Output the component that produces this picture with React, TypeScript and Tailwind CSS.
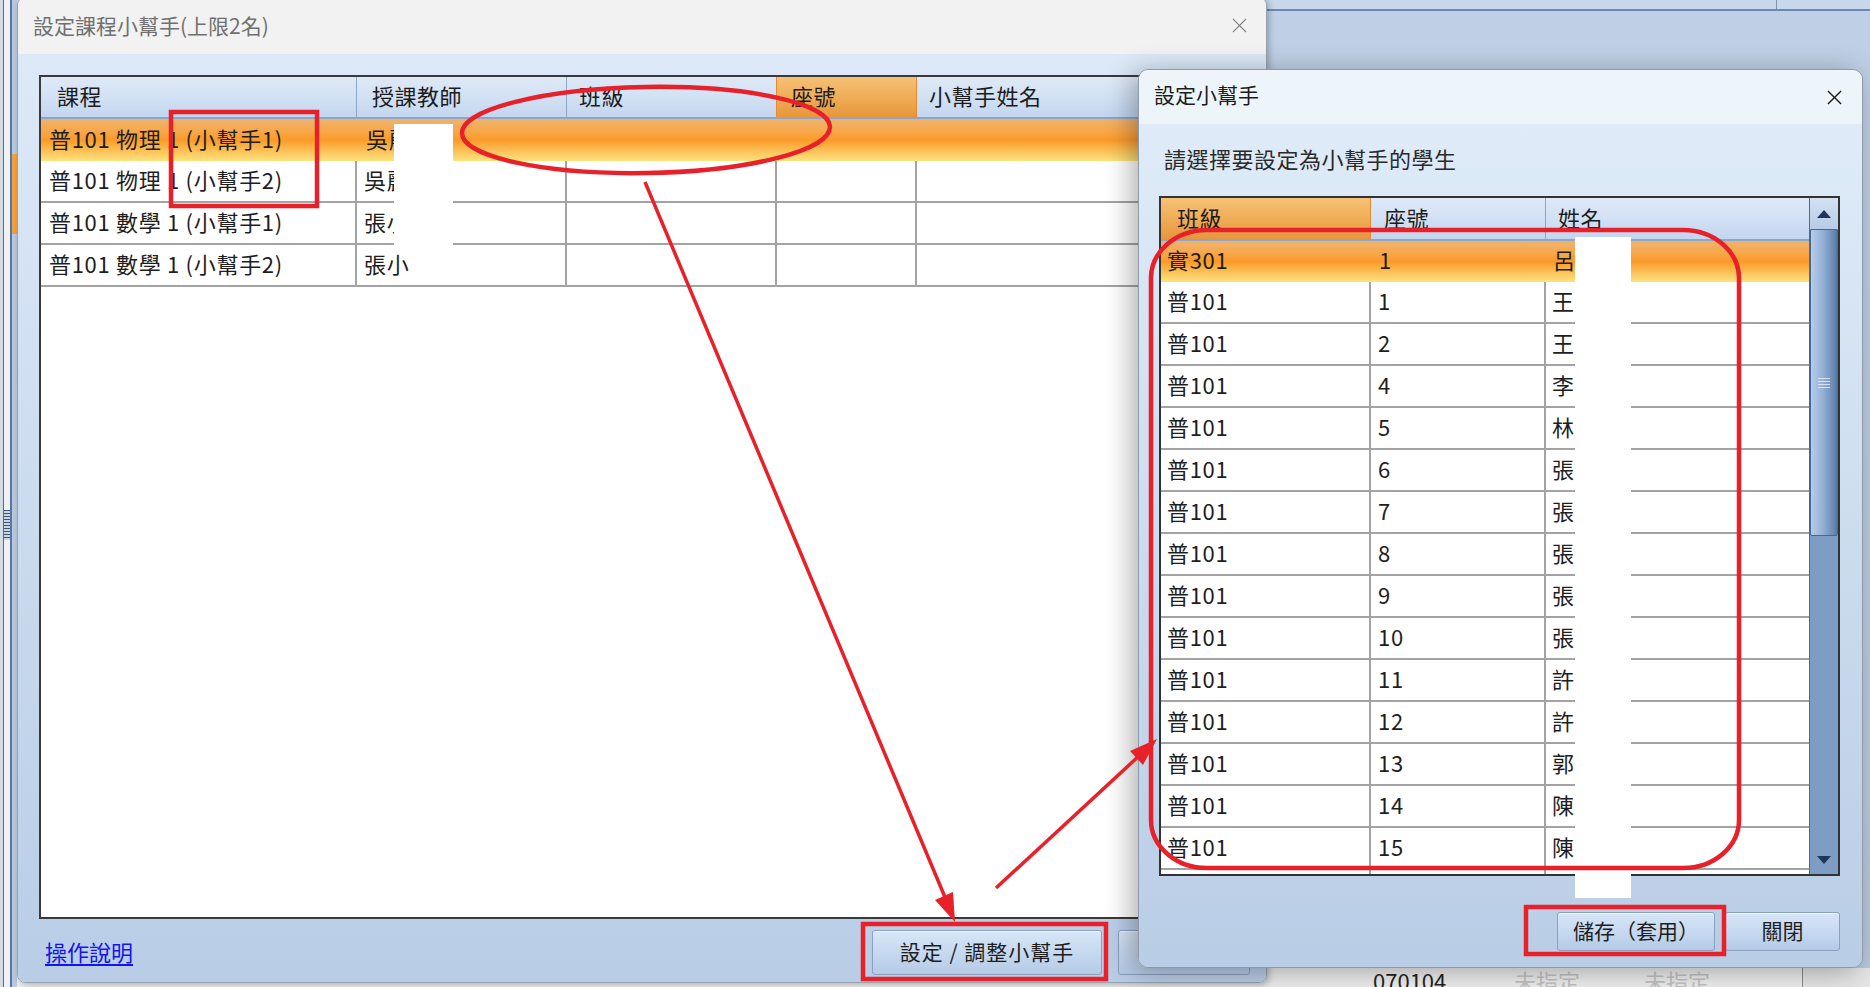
import React from "react";

const FONT = "font-['Noto_Sans_CJK_TC','Noto_Sans',sans-serif]";

const blueHead =
  "bg-[linear-gradient(to_bottom,#dfe9f7_0%,#d2e1f4_50%,#c3d6ef_100%)]";
const orangeHead =
  "bg-[linear-gradient(to_bottom,#f6c176_0%,#f0ad57_50%,#e7963b_100%)]";
const orangeRow =
  "bg-[linear-gradient(to_bottom,#efb26f_0%,#f7a84c_28%,#fb9a29_50%,#fcc158_76%,#fde37d_100%)]";

const courses = [
  { course: "普101 物理 1 (小幫手1)", teacher: "吳麗" },
  { course: "普101 物理 1 (小幫手2)", teacher: "吳麗" },
  { course: "普101 數學 1 (小幫手1)", teacher: "張小" },
  { course: "普101 數學 1 (小幫手2)", teacher: "張小" },
];

const students = [
  { cls: "實301", no: "1", name: "呂" },
  { cls: "普101", no: "1", name: "王" },
  { cls: "普101", no: "2", name: "王" },
  { cls: "普101", no: "4", name: "李" },
  { cls: "普101", no: "5", name: "林" },
  { cls: "普101", no: "6", name: "張" },
  { cls: "普101", no: "7", name: "張" },
  { cls: "普101", no: "8", name: "張" },
  { cls: "普101", no: "9", name: "張" },
  { cls: "普101", no: "10", name: "張" },
  { cls: "普101", no: "11", name: "許" },
  { cls: "普101", no: "12", name: "許" },
  { cls: "普101", no: "13", name: "郭" },
  { cls: "普101", no: "14", name: "陳" },
  { cls: "普101", no: "15", name: "陳" },
  { cls: "普101", no: "16", name: "陳" },
];

function CloseIcon({ color, size, stroke }: { color: string; size: number; stroke: number }) {
  return (
    <svg width={size} height={size} viewBox="0 0 16 16">
      <path d="M1 1 L15 15 M15 1 L1 15" stroke={color} strokeWidth={stroke} fill="none" />
    </svg>
  );
}

function OfficeButton({ label, className }: { label: string; className: string }) {
  return (
    <div
      className={`flex items-center justify-center pb-[2px] rounded-[3px] border border-[#8aa0bf] bg-[linear-gradient(to_bottom,#d8e6f7_0%,#c6d9f0_50%,#b5cae6_100%)] shadow-[inset_0_1px_0_rgba(255,255,255,0.7)] text-[21px] leading-none text-[#1e1e1e] ${className}`}
    >
      {label}
    </div>
  );
}

function BackgroundApp() {
  return (
    <div className="absolute inset-0 flex">
      {/* window chrome on the far left */}
      <div className="w-[17px] h-full flex">
        <div className="w-[3px] bg-[#d6dce4]" />
        <div className="w-[1px] bg-[#4f6c93]" />
        <div className="w-[6px] flex flex-col bg-[#eef2f7]">
          <div className="h-[510px]" />
          <div className="h-[30px] bg-[repeating-linear-gradient(to_bottom,#3d5677_0px,#3d5677_1px,#c9d6e6_1px,#c9d6e6_3px)]" />
        </div>
        <div className="w-[2px] bg-[#5876a0]" />
        <div className="w-[5px] flex flex-col bg-[#b9cae0]">
          <div className="h-[154px]" />
          <div className="h-[80px] bg-[#f2a341]" />
        </div>
      </div>
      <div className="flex-1 flex flex-col">
        <div className="h-[9px] bg-[#c8d8ec] flex">
          <div className="w-[1759px]" />
          <div className="w-[1px] bg-[#7f93ad]" />
        </div>
        <div className="h-[2px] bg-[#6d88ad]" />
        <div className="flex-1 bg-linear-to-b from-[#bfd0e6] to-[#b8c9de]" />
        <div className="h-[19px] bg-[#efefef] flex text-[22px] leading-none">
          <div className="w-[1356px]" />
          <div className="w-[141px] pt-[1px] text-[#222]">070104</div>
          <div className="w-[130px] pt-[1px] text-[#c4c4c4]">未指定</div>
          <div className="w-[158px] pt-[1px] text-[#c4c4c4]">未指定</div>
          <div className="w-[1px] bg-[#8a8a8a]" />
          <div className="flex-1 bg-[#e6e6e6]" />
        </div>
      </div>
    </div>
  );
}

const cellText = "text-[22px] leading-none tracking-[0.7px] text-[#1e1e1e]";

function CourseTable() {
  return (
    <div className="h-[844px] border-2 border-[#3a3a3a] bg-white flex flex-col overflow-hidden">
      <div className="h-[42px] shrink-0 flex border-b-2 border-[#8ba6c9] text-[22px] leading-none tracking-[0.5px] text-[#1c1c1c]">
        <div className={`w-[316px] shrink-0 flex items-center pb-[4px] pl-[16px] border-r border-[#8ba6c9] ${blueHead}`}>課程</div>
        <div className={`w-[210px] shrink-0 flex items-center pb-[4px] pl-[15px] border-r border-[#8ba6c9] ${blueHead}`}>授課教師</div>
        <div className={`w-[210px] shrink-0 flex items-center pb-[4px] pl-[12px] border-r border-[#e58a33] ${blueHead}`}>班級</div>
        <div className={`w-[140px] shrink-0 flex items-center pb-[4px] pl-[14px] border-r border-[#e58a33] ${orangeHead}`}>座號</div>
        <div className={`flex-1 flex items-center pb-[4px] pl-[12px] ${blueHead}`}>小幫手姓名</div>
      </div>
      {courses.map((r, i) =>
        i === 0 ? (
          <div key={i} className={`h-[42px] shrink-0 flex ${cellText} ${orangeRow}`}>
            <div className="w-[318px] shrink-0 flex items-center pb-[4px] pl-[8px]">{r.course}</div>
            <div className="w-[210px] shrink-0 flex items-center pb-[4px] pl-[7px]">{r.teacher}</div>
            <div className="flex-1" />
          </div>
        ) : (
          <div key={i} className={`h-[42px] shrink-0 flex border-b-2 border-[#a3a3a3] ${cellText}`}>
            <div className="w-[316px] shrink-0 flex items-center pb-[4px] pl-[8px] border-r-2 border-[#a3a3a3]">{r.course}</div>
            <div className="w-[210px] shrink-0 flex items-center pb-[4px] pl-[7px] border-r-2 border-[#a3a3a3]">{r.teacher}</div>
            <div className="w-[210px] shrink-0 border-r-2 border-[#a3a3a3]" />
            <div className="w-[140px] shrink-0 border-r-2 border-[#a3a3a3]" />
            <div className="flex-1" />
          </div>
        )
      )}
    </div>
  );
}

function ScrollBar() {
  return (
    <div className="w-[29px] shrink-0 flex flex-col border-l border-[#4f6a92] bg-[#7d9dc4]">
      <div className="h-[31px] shrink-0 flex items-center justify-center bg-linear-to-b from-[#d3e1f3] to-[#b7cbe6]">
        <svg width="14" height="8" viewBox="0 0 14 8">
          <path d="M0 8 L7 0 L14 8 Z" fill="#1f3557" />
        </svg>
      </div>
      <div className="h-[307px] shrink-0 rounded-[2px] border border-[#4b6690] bg-[linear-gradient(to_right,#b6cdea_0%,#94b0d5_45%,#6b8bb5_85%,#5a799f_100%)] flex items-center justify-center">
        <div className="flex flex-col gap-[2px]">
          <div className="w-[12px] h-[1px] bg-[#d9e3f0]" />
          <div className="w-[12px] h-[1px] bg-[#d9e3f0]" />
          <div className="w-[12px] h-[1px] bg-[#d9e3f0]" />
          <div className="w-[12px] h-[1px] bg-[#d9e3f0]" />
        </div>
      </div>
      <div className="flex-1" />
      <div className="h-[24px] shrink-0 flex items-start justify-center pt-[6px]">
        <svg width="14" height="8" viewBox="0 0 14 8">
          <path d="M0 0 L14 0 L7 8 Z" fill="#1f3557" />
        </svg>
      </div>
    </div>
  );
}

function StudentTable() {
  return (
    <div className="h-[680px] border-2 border-[#333333] bg-white flex overflow-hidden">
      <div className="flex-1 flex flex-col overflow-hidden">
        <div className="h-[43px] shrink-0 flex border-b-2 border-[#8ba6c9] text-[22px] leading-none tracking-[0.5px] text-[#1c1c1c]">
          <div className={`w-[210px] shrink-0 flex items-center pb-[4px] pl-[16px] border-r border-[#e58a33] ${orangeHead}`}>班級</div>
          <div className={`w-[175px] shrink-0 flex items-center pb-[4px] pl-[13px] border-r border-[#8ba6c9] ${blueHead}`}>座號</div>
          <div className={`flex-1 flex items-center pb-[4px] pl-[12px] ${blueHead}`}>姓名</div>
        </div>
        {students.map((s, i) =>
          i === 0 ? (
            <div key={i} className={`h-[41px] shrink-0 flex ${cellText} ${orangeRow}`}>
              <div className="w-[210px] shrink-0 flex items-center pb-[5px] pl-[6px]">{s.cls}</div>
              <div className="w-[175px] shrink-0 flex items-center pb-[5px] pl-[8px]">{s.no}</div>
              <div className="flex-1 flex items-center pb-[5px] pl-[7px]">{s.name}</div>
            </div>
          ) : (
            <div key={i} className={`h-[42px] shrink-0 flex border-b-2 border-[#a3a3a3] ${cellText}`}>
              <div className="w-[210px] shrink-0 flex items-center pb-[4px] pl-[6px] border-r-2 border-[#a3a3a3]">{s.cls}</div>
              <div className="w-[175px] shrink-0 flex items-center pb-[4px] pl-[7px] border-r-2 border-[#a3a3a3]">{s.no}</div>
              <div className="flex-1 flex items-center pb-[4px] pl-[6px]">{s.name}</div>
            </div>
          )
        )}
      </div>
      <ScrollBar />
    </div>
  );
}

function CourseHelperDialog() {
  return (
    <div className="absolute left-[17px] top-[-3px] w-[1250px] h-[986px] rounded-[8px] border border-[#98a2ae] overflow-hidden flex flex-col shadow-[2px_2px_6px_rgba(0,0,0,0.25)]">
      <div className="h-[56px] shrink-0 bg-[#f2f2f2] flex items-center justify-between pl-[15px] pr-[19px] pb-[1px]">
        <span className="text-[21px] leading-none text-[#707070]">設定課程小幫手(上限2名)</span>
        <CloseIcon color="#7a7a7a" size={15} stroke={1.2} />
      </div>
      <div className="flex-1 flex flex-col px-[21px] pt-[21px] bg-linear-to-b from-[#dde9f8] to-[#b9cde7]">
        <CourseTable />
        <div className="mt-[11px] h-[45px] flex items-center -mr-[5px]">
          <span className="pl-[6px] pb-[3px] text-[22px] leading-none text-[#1414f0] underline underline-offset-[3px]">操作說明</span>
          <div className="ml-auto flex gap-[16px] h-full">
            <OfficeButton label="設定 / 調整小幫手" className="w-[230px] h-full tracking-[1px]" />
            <OfficeButton label="關閉" className="w-[132px] h-full" />
          </div>
        </div>
      </div>
    </div>
  );
}

function PickHelperDialog() {
  return (
    <div className="absolute left-[1138px] top-[69px] w-[725px] h-[899px] rounded-[10px] border border-[#8f9aa7] overflow-hidden flex flex-col shadow-[-6px_4px_28px_rgba(0,0,0,0.32)]">
      <div className="h-[54px] shrink-0 bg-[#edf5fa] flex items-center justify-between pl-[15px] pr-[20px]">
        <span className="pb-[5px] text-[21px] leading-none text-[#1c1c1c]">設定小幫手</span>
        <CloseIcon color="#1a1a1a" size={15} stroke={1.5} />
      </div>
      <div className="flex-1 flex flex-col pl-[20px] pr-[22px] pt-[23px] bg-linear-to-b from-[#dfebf8] to-[#b9cde6]">
        <div className="h-[25px] pl-[5px] text-[22px] leading-none tracking-[0.5px] text-[#2a2a2a]">請選擇要設定為小幫手的學生</div>
        <div className="mt-[24px]">
          <StudentTable />
        </div>
        <div className="mt-[36px] h-[39px] flex justify-end gap-[10px]">
          <OfficeButton label="儲存（套用）" className="w-[158px] h-full" />
          <OfficeButton label="關閉" className="w-[115px] h-full" />
        </div>
      </div>
    </div>
  );
}

function Markup() {
  const red = "#e8202a";
  return (
    <svg className="absolute left-0 top-0 pointer-events-none" width="1870" height="987" viewBox="0 0 1870 987">
      {/* privacy blocks over the names */}
      <rect x="394" y="124" width="59" height="121" fill="#ffffff" />
      <rect x="1575" y="237" width="56" height="661" fill="#ffffff" />
      {/* callouts */}
      <rect x="171" y="112" width="146" height="94" fill="none" stroke={red} strokeWidth="4.5" />
      <ellipse cx="646" cy="130" rx="184" ry="43" fill="none" stroke={red} strokeWidth="4.5" transform="rotate(-1 646 130)" />
      <line x1="645" y1="182" x2="947" y2="902" stroke={red} strokeWidth="3.5" />
      <polygon points="955,922 935,900 953,892" fill={red} />
      <line x1="996" y1="888" x2="1140" y2="755" stroke={red} strokeWidth="3.5" />
      <polygon points="1157,739 1143,765 1130,751" fill={red} />
      <rect x="1151" y="230" width="588" height="638" rx="56" ry="48" fill="none" stroke={red} strokeWidth="4.5" />
      <rect x="1526" y="907" width="198" height="47" fill="none" stroke={red} strokeWidth="4.5" />
      <rect x="863" y="924" width="243" height="55" fill="none" stroke={red} strokeWidth="4.5" />
    </svg>
  );
}

export default function App() {
  return (
    <div className={`relative w-[1870px] h-[987px] overflow-hidden bg-[#bccde3] ${FONT}`}>
      <BackgroundApp />
      <CourseHelperDialog />
      <PickHelperDialog />
      <Markup />
    </div>
  );
}
